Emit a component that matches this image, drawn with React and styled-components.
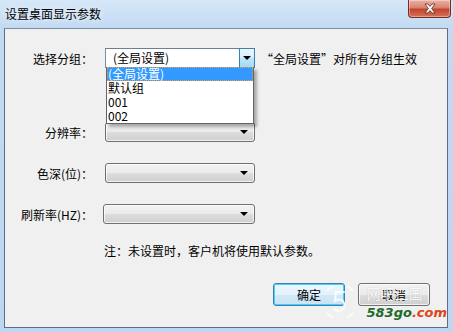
import React from 'react';
import styled, { createGlobalStyle, css } from 'styled-components';

const GlobalStyle = createGlobalStyle`
  html, body {
    margin: 0;
    padding: 0;
    background: #ffffff;
  }
  body {
    font-family: "Noto Sans CJK SC", "DejaVu Sans", sans-serif;
    font-size: 12px;
    color: #000;
  }
`;

const Frame = styled.div`
  width: 453px;
  height: 332px;
  box-sizing: border-box;
  display: flex;
  flex-direction: column;
  background: linear-gradient(to bottom, #d6e7f8 0px, #c3daf3 28px, #bdd6f1 100%);
  padding: 0 5px 4px 4px;
  position: relative;
  overflow: hidden;
`;

const TitleBar = styled.div`
  height: 28px;
  display: flex;
  align-items: flex-start;
  justify-content: space-between;
`;

const Title = styled.div`
  padding: 7px 0 0 1px;
  font-size: 12px;
  line-height: 14px;
  color: #000;
  text-shadow: 0 0 6px rgba(255, 255, 255, 0.9);
`;

const CloseButton = styled.div`
  width: 43px;
  height: 18px;
  margin-right: -3px;
  box-sizing: border-box;
  border: 1px solid #7a2b22;
  border-top: none;
  border-radius: 0 0 4px 4px;
  background: linear-gradient(to bottom, #eab3a6 0%, #d7826f 45%, #c4432c 55%, #d3735c 100%);
  box-shadow: inset 0 0 0 1px rgba(255, 255, 255, 0.35);
  display: flex;
  align-items: center;
  justify-content: center;
`;

const Client = styled.div`
  flex: 1;
  box-sizing: border-box;
  border: 1px solid #5e6e80;
  border-top-color: #7f8fa2;
  background: #f0f0f0;
  display: flex;
  flex-direction: column;
  padding-top: 19px;
`;

const Row = styled.div`
  display: grid;
  grid-template-columns: 88px 150px auto;
  column-gap: 12px;
  align-items: center;
  height: 20px;
  margin-top: ${(p) => p.$gap || 0}px;
`;

const Label = styled.div`
  text-align: right;
  white-space: nowrap;
  line-height: 14px;
  padding-top: 2px;
`;

const ComboCell = styled.div`
  position: relative;
  height: 20px;
  margin-left: ${(p) => p.$shift || 0}px;
`;

const EditCombo = styled.div`
  height: 20px;
  box-sizing: border-box;
  border: 1px solid #7b8ea4;
  border-top-color: #6e7f95;
  background: #ffffff;
  display: flex;
  align-items: stretch;
`;

const EditText = styled.div`
  flex: 1;
  padding-left: 7px;
  line-height: 18px;
  white-space: nowrap;
`;

const ArrowButton = styled.div`
  width: 16px;
  box-sizing: border-box;
  border: 1px solid #3c7fb1;
  margin: -1px -1px -1px 0;
  background: linear-gradient(to bottom, #eaf6fd 0%, #d9f0fc 45%, #bee6fd 50%, #a7d9f5 100%);
  display: flex;
  align-items: center;
  justify-content: center;
`;

const ListCombo = styled.div`
  height: 20px;
  box-sizing: border-box;
  border: 1px solid #707070;
  border-radius: 3px;
  background: linear-gradient(to bottom, #f2f2f2 0%, #ebebeb 50%, #dddddd 51%, #cfcfcf 100%);
  box-shadow: inset 0 0 0 1px rgba(255, 255, 255, 0.7);
  display: flex;
  align-items: center;
  justify-content: flex-end;
  padding-right: 6px;
`;

const Triangle = styled.span`
  width: 0;
  height: 0;
  border-left: 4px solid transparent;
  border-right: 4px solid transparent;
  border-top: 4px solid #000;
`;

const DropList = styled.div`
  position: absolute;
  top: 19px;
  left: 1px;
  width: 148px;
  box-sizing: border-box;
  border: 1px solid #646464;
  border-top: none;
  background: #ffffff;
  box-shadow: 3px 3px 3px rgba(0, 0, 0, 0.3);
  z-index: 5;
`;

const Item = styled.div`
  height: 14px;
  line-height: 14px;
  padding-left: 1px;
  box-sizing: border-box;
  white-space: nowrap;
  ${(p) =>
    p.$selected &&
    css`
      background: #3399ff;
      color: #ffffff;
      outline: 1px dotted #e8a040;
      outline-offset: -1px;
    `}
`;

const Hint = styled.div`
  margin-left: -6px;
  padding-top: 2px;
  white-space: nowrap;
  line-height: 14px;
`;

const Note = styled.div`
  margin-top: 20px;
  padding-left: 99px;
  line-height: 14px;
`;

const ButtonBar = styled.div`
  margin-top: 25px;
  display: flex;
  justify-content: flex-end;
  gap: 13px;
  padding-right: 17px;
`;

const Button = styled.div`
  width: 72px;
  height: 23px;
  box-sizing: border-box;
  border: 1px solid ${(p) => (p.$default ? '#3c7fb1' : '#707070')};
  border-radius: 3px;
  background: ${(p) =>
    p.$default
      ? 'linear-gradient(to bottom, #eaf6fd 0%, #e4f2fb 50%, #d2e9f7 51%, #c9e3f4 100%)'
      : 'linear-gradient(to bottom, #f2f2f2 0%, #ebebeb 50%, #dddddd 51%, #cfcfcf 100%)'};
  box-shadow: inset 0 0 0 1px ${(p) => (p.$default ? '#48d0fb' : 'rgba(255,255,255,0.7)')};
  display: flex;
  align-items: center;
  justify-content: center;
  line-height: 14px;
`;

const Watermark = styled.div`
  position: absolute;
  right: 6px;
  bottom: 10px;
  display: flex;
  align-items: center;
  gap: 14px;
  pointer-events: none;
  z-index: 6;
`;

const MarkText = styled.div`
  display: flex;
  flex-direction: column;
  align-items: flex-start;
  gap: 6px;
`;

const MarkName = styled.div`
  font-size: 14px;
  line-height: 14px;
  color: rgba(255, 255, 255, 0.9);
  text-shadow: 0 0 1px rgba(120, 120, 120, 0.45);
`;

const MarkSite = styled.div`
  font-family: "DejaVu Sans", sans-serif;
  font-size: 13px;
  line-height: 13px;
  font-weight: bold;
  font-style: italic;
  color: #1d6b2b;
  & > span {
    color: #e0441c;
  }
`;

function CloseGlyph() {
  return (
    <svg width="14" height="11" viewBox="0 0 14 11">
      <path
        d="M2 1 L5 1 L7 3.5 L9 1 L12 1 L8.6 5.5 L12 10 L9 10 L7 7.5 L5 10 L2 10 L5.4 5.5 Z"
        fill="#ffffff"
        stroke="#5a2a22"
        strokeWidth="0.8"
        strokeLinejoin="round"
      />
    </svg>
  );
}

function LogoFive() {
  return (
    <svg width="26" height="40" viewBox="0 0 26 40">
      <path
        d="M6 4 A18 18 0 0 0 6 36"
        fill="none"
        stroke="rgba(255,255,255,0.8)"
        strokeWidth="1.6"
      />
      <path
        d="M20 4 A18 18 0 0 1 20 36"
        fill="none"
        stroke="rgba(255,255,255,0.8)"
        strokeWidth="1.6"
      />
      <path
        d="M17 10 L9 10 L8 19 Q13 16 16 19 Q19 23 16 27 Q12 31 7 27"
        fill="none"
        stroke="rgba(255,255,255,0.85)"
        strokeWidth="2"
        strokeLinecap="round"
      />
    </svg>
  );
}

export default function App() {
  return (
    <>
      <GlobalStyle />
      <Frame>
        <TitleBar>
          <Title>设置桌面显示参数</Title>
          <CloseButton>
            <CloseGlyph />
          </CloseButton>
        </TitleBar>
        <Client>
          <Row>
            <Label>选择分组：</Label>
            <ComboCell>
              <EditCombo>
                <EditText>(全局设置)</EditText>
                <ArrowButton>
                  <Triangle />
                </ArrowButton>
              </EditCombo>
              <DropList>
                <Item $selected>(全局设置)</Item>
                <Item>默认组</Item>
                <Item>001</Item>
                <Item>002</Item>
              </DropList>
            </ComboCell>
            <Hint>“全局设置”对所有分组生效</Hint>
          </Row>
          <Row $gap={54}>
            <Label>分辨率：</Label>
            <ComboCell>
              <ListCombo>
                <Triangle />
              </ListCombo>
            </ComboCell>
          </Row>
          <Row $gap={21}>
            <Label>色深(位)：</Label>
            <ComboCell>
              <ListCombo>
                <Triangle />
              </ListCombo>
            </ComboCell>
          </Row>
          <Row $gap={21}>
            <Label>刷新率(HZ)：</Label>
            <ComboCell $shift={-2}>
              <ListCombo>
                <Triangle />
              </ListCombo>
            </ComboCell>
          </Row>
          <Note>注：未设置时，客户机将使用默认参数。</Note>
          <ButtonBar>
            <Button $default>确定</Button>
            <Button>取消</Button>
          </ButtonBar>
        </Client>
        <Watermark>
          <LogoFive />
          <MarkText>
            <MarkName>网吧三国</MarkName>
            <MarkSite>
              583go<span>.com</span>
            </MarkSite>
          </MarkText>
        </Watermark>
      </Frame>
    </>
  );
}
